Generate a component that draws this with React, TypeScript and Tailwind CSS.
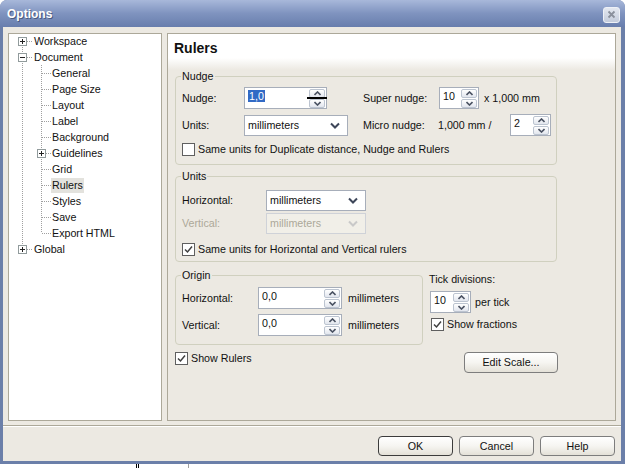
import React from "react";

const UpArrow = () => (
  <svg width="7" height="5" viewBox="0 0 7 5">
    <path d="M0.5 4 L3.5 1 L6.5 4" stroke="#4a5262" strokeWidth="1.6" fill="none" />
  </svg>
);
const DownArrow = () => (
  <svg width="7" height="5" viewBox="0 0 7 5">
    <path d="M0.5 1 L3.5 4 L6.5 1" stroke="#4a5262" strokeWidth="1.6" fill="none" />
  </svg>
);

function SpinButtons() {
  return (
    <div className="flex flex-col gap-[1px] mr-[1px] shrink-0">
      <div className="w-[16px] h-[9px] rounded-[2px] border border-[#bcc4d0] bg-gradient-to-b from-white to-[#e2e6ee] flex items-center justify-center">
        <UpArrow />
      </div>
      <div className="w-[16px] h-[9px] rounded-[2px] border border-[#bcc4d0] bg-gradient-to-b from-white to-[#e2e6ee] flex items-center justify-center">
        <DownArrow />
      </div>
    </div>
  );
}

function Spin({ value, className, children }: { value?: React.ReactNode; className: string; children?: React.ReactNode }) {
  return (
    <div className={"relative flex items-center h-[22px] bg-white border border-[#a7aeba] shrink-0 " + className}>
      <div className="flex-1 pl-[3px] self-start pt-[2px] leading-[13px]">{value}</div>
      <SpinButtons />
      {children}
    </div>
  );
}

function Combo({ value, className, disabled }: { value: string; className: string; disabled?: boolean }) {
  return (
    <div
      className={
        "flex items-center justify-between h-[21px] border shrink-0 pl-[3px] pr-[7px] " +
        (disabled ? "bg-[#f1efe8] border-[#cfd2d8] text-[#aca899] " : "bg-white border-[#a7aeba] ") +
        className
      }
    >
      <span>{value}</span>
      <svg width="10" height="7" viewBox="0 0 10 7">
        <path d="M1 1.5 L5 5.5 L9 1.5" stroke={disabled ? "#c9c9c9" : "#3d4659"} strokeWidth="2" fill="none" />
      </svg>
    </div>
  );
}

function Check({ checked, label }: { checked?: boolean; label: string }) {
  return (
    <div className="flex items-center h-[13px]">
      <div className="w-[13px] h-[13px] border border-[#5f5f5f] bg-white flex items-center justify-center shrink-0">
        {checked && (
          <svg width="9" height="9" viewBox="0 0 9 9">
            <path d="M1 4.5 L3.5 7 L8 1.5" stroke="#404040" strokeWidth="1.5" fill="none" />
          </svg>
        )}
      </div>
      <span className="ml-[3px] leading-[13px] whitespace-nowrap">{label}</span>
    </div>
  );
}

function Group({ title, className, children }: { title: string; className: string; children: React.ReactNode }) {
  return (
    <div className={"relative border border-[#d0d0bf] rounded-[4px] " + className}>
      <span className="absolute -top-[7px] left-[5px] px-[1px] bg-[#ece9e2] leading-[13px]">{title}</span>
      {children}
    </div>
  );
}

function Cell({ up, down, right, box }: { up?: boolean; down?: boolean; right?: boolean; box?: "+" | "-" }) {
  return (
    <svg width="19" height="16" className="shrink-0">
      {up && <line x1="9.5" y1="0" x2="9.5" y2="8" stroke="#a0a0a0" strokeDasharray="1 1" />}
      {down && <line x1="9.5" y1="8" x2="9.5" y2="16" stroke="#a0a0a0" strokeDasharray="1 1" />}
      {right && <line x1="10" y1="8.5" x2="19" y2="8.5" stroke="#a0a0a0" strokeDasharray="1 1" />}
      {box && (
        <g>
          <rect x="5.5" y="4.5" width="8" height="8" fill="white" stroke="#919b9c" />
          <line x1="7" y1="8.5" x2="12" y2="8.5" stroke="#222" />
          {box === "+" && <line x1="9.5" y1="6" x2="9.5" y2="11" stroke="#222" />}
        </g>
      )}
    </svg>
  );
}

const children = ["General", "Page Size", "Layout", "Label", "Background", "Guidelines", "Grid", "Rulers", "Styles", "Save", "Export HTML"];

function Tree() {
  return (
    <div className="w-[154px] h-[388px] bg-white border border-[#aca899] pl-[4px] shrink-0">
      <div className="-mt-[1px]">
        <div className="flex items-center h-[16px]">
          <Cell down right box="+" />
          <span className="ml-[2px]">Workspace</span>
        </div>
        <div className="flex items-center h-[16px]">
          <Cell up down right box="-" />
          <span className="ml-[2px]">Document</span>
        </div>
        {children.map((c, i) => (
          <div key={c} className="flex items-center h-[16px]">
            <Cell up down />
            <Cell up down={i < children.length - 1} right box={c === "Guidelines" ? "+" : undefined} />
            <span className={"px-[1px] leading-[15px] " + (c === "Rulers" ? "bg-[#e3e2dd]" : "")}>{c}</span>
          </div>
        ))}
        <div className="flex items-center h-[16px]">
          <Cell up right box="+" />
          <span className="ml-[2px]">Global</span>
        </div>
      </div>
    </div>
  );
}

function Btn({ label, isDefault, className }: { label: string; isDefault?: boolean; className: string }) {
  return (
    <div
      className={
        "flex items-center justify-center h-[20px] rounded-[4px] bg-gradient-to-b from-white via-[#f6f5f1] to-[#e4e1d8] " +
        (isDefault ? "border-[1.5px] border-[#3c3c3c] " : "border border-[#7d7d7d] ") +
        className
      }
    >
      {label}
    </div>
  );
}

function RightPanel() {
  return (
    <div className="w-[449px] h-[388px] border border-[#aca899] bg-[#ece9e2] flex flex-col shrink-0">
      <div className="h-[24px] bg-white pl-[6px] pt-[5px] leading-[18px] font-bold text-[14px]">Rulers</div>
      <div className="h-[12px] bg-gradient-to-b from-white to-[#ece9e2]" />

      <div className="pl-[7px]">
        <Group title="Nudge" className="w-[382px] h-[89px] mt-[6px] pl-[6px] pt-[10px]">
          <div className="flex items-center h-[22px]">
            <div className="flex items-center w-[181px]">
              <span className="w-[62px]">Nudge:</span>
              <Spin
                className="w-[83px]"
                value={<span className="bg-[#316ac5] text-white px-[1px]">1,0</span>}
              >
                <div className="absolute left-[62px] top-[9px] w-[20px] h-[2px] bg-black" />
              </Spin>
            </div>
            <span className="w-[76px]">Super nudge:</span>
            <Spin className="w-[40px]" value="10" />
            <span className="ml-[5px]">x 1,000 mm</span>
          </div>
          <div className="flex items-center h-[22px] mt-[5px]">
            <div className="flex items-center w-[181px]">
              <span className="w-[62px]">Units:</span>
              <Combo value="millimeters" className="w-[104px]" />
            </div>
            <span className="w-[75px]">Micro nudge:</span>
            <span className="w-[72px]">1,000 mm /</span>
            <Spin className="w-[41px]" value="2" />
          </div>
          <div className="mt-[7px]">
            <Check label="Same units for Duplicate distance, Nudge and Rulers" />
          </div>
        </Group>

        <Group title="Units" className="w-[382px] h-[86px] mt-[11px] pl-[6px] pt-[13px]">
          <div className="flex items-center h-[21px]">
            <span className="w-[84px]">Horizontal:</span>
            <Combo value="millimeters" className="w-[100px]" />
          </div>
          <div className="flex items-center h-[21px] mt-[2px]">
            <span className="w-[84px] text-[#aca899]">Vertical:</span>
            <Combo value="millimeters" className="w-[100px]" disabled />
          </div>
          <div className="mt-[9px]">
            <Check checked label="Same units for Horizontal and Vertical rulers" />
          </div>
        </Group>

        <div className="flex mt-[13px]">
          <Group title="Origin" className="w-[248px] h-[70px] pl-[6px] pt-[11px] shrink-0">
            <div className="flex items-center h-[22px]">
              <span className="w-[76px]">Horizontal:</span>
              <Spin className="w-[84px]" value="0,0" />
              <span className="ml-[6px]">millimeters</span>
            </div>
            <div className="flex items-center h-[22px] mt-[5px]">
              <span className="w-[76px]">Vertical:</span>
              <Spin className="w-[84px]" value="0,0" />
              <span className="ml-[6px]">millimeters</span>
            </div>
          </Group>
          <div className="ml-[6px] -mt-[2px] flex flex-col">
            <span className="leading-[13px]">Tick divisions:</span>
            <div className="flex items-center mt-[5px] ml-[1px]">
              <Spin className="w-[41px]" value="10" />
              <span className="ml-[4px]">per tick</span>
            </div>
            <div className="mt-[5px] ml-[2px]">
              <Check checked label="Show fractions" />
            </div>
          </div>
        </div>

        <div className="flex items-start mt-[7px] w-[383px] justify-between">
          <Check checked label="Show Rulers" />
          <Btn label="Edit Scale..." className="w-[94px] h-[21px]" />
        </div>
      </div>
    </div>
  );
}

export default function App() {
  return (
    <div className="w-[625px] h-[468px] bg-white overflow-hidden text-[10.7px] text-[#111] font-['Liberation_Sans',Arial,sans-serif]">
      <div className="w-[625px] h-[464px] flex flex-col rounded-t-[7px] bg-[#6b7fa9] overflow-hidden">
        <div className="h-[27px] shrink-0 bg-gradient-to-b from-[#a8b8da] via-[#7f93bf] to-[#687ead] flex items-center justify-between pl-[7px] pr-[5px]">
          <span className="text-white font-bold text-[12px] mt-[1px] [text-shadow:1px_1px_0_#4a5a80]">Options</span>
          <div className="w-[17px] h-[16px] mt-[2px] rounded-[3px] border border-[#eef1f7] bg-gradient-to-b from-[#e4e8f0] to-[#c4ccdb] flex items-center justify-center">
            <svg width="9" height="9" viewBox="0 0 9 9">
              <path d="M1.5 1.5 L7.5 7.5 M7.5 1.5 L1.5 7.5" stroke="#8a909c" strokeWidth="1.8" />
            </svg>
          </div>
        </div>
        <div className="flex-1 ml-[3px] mr-[4px] mb-[3px] bg-[#ece9e2] flex flex-col">
          <div className="flex gap-[5px] px-[5px] pt-[6px]">
            <Tree />
            <RightPanel />
          </div>
          <div className="mt-[4px] h-[2px] border-t border-[#aca899] border-b border-b-white" />
          <div className="flex justify-end gap-[6px] pr-[6px] mt-[9px]">
            <Btn label="OK" isDefault className="w-[75px]" />
            <Btn label="Cancel" className="w-[75px]" />
            <Btn label="Help" className="w-[75px]" />
          </div>
        </div>
      </div>
      <div className="flex h-[4px]">
        <div className="ml-[136px] w-[1px] bg-black" />
        <div className="ml-[1px] w-[1px] bg-black" />
        <div className="ml-[49px] w-[1px] bg-[#a0a0a0]" />
      </div>
    </div>
  );
}
